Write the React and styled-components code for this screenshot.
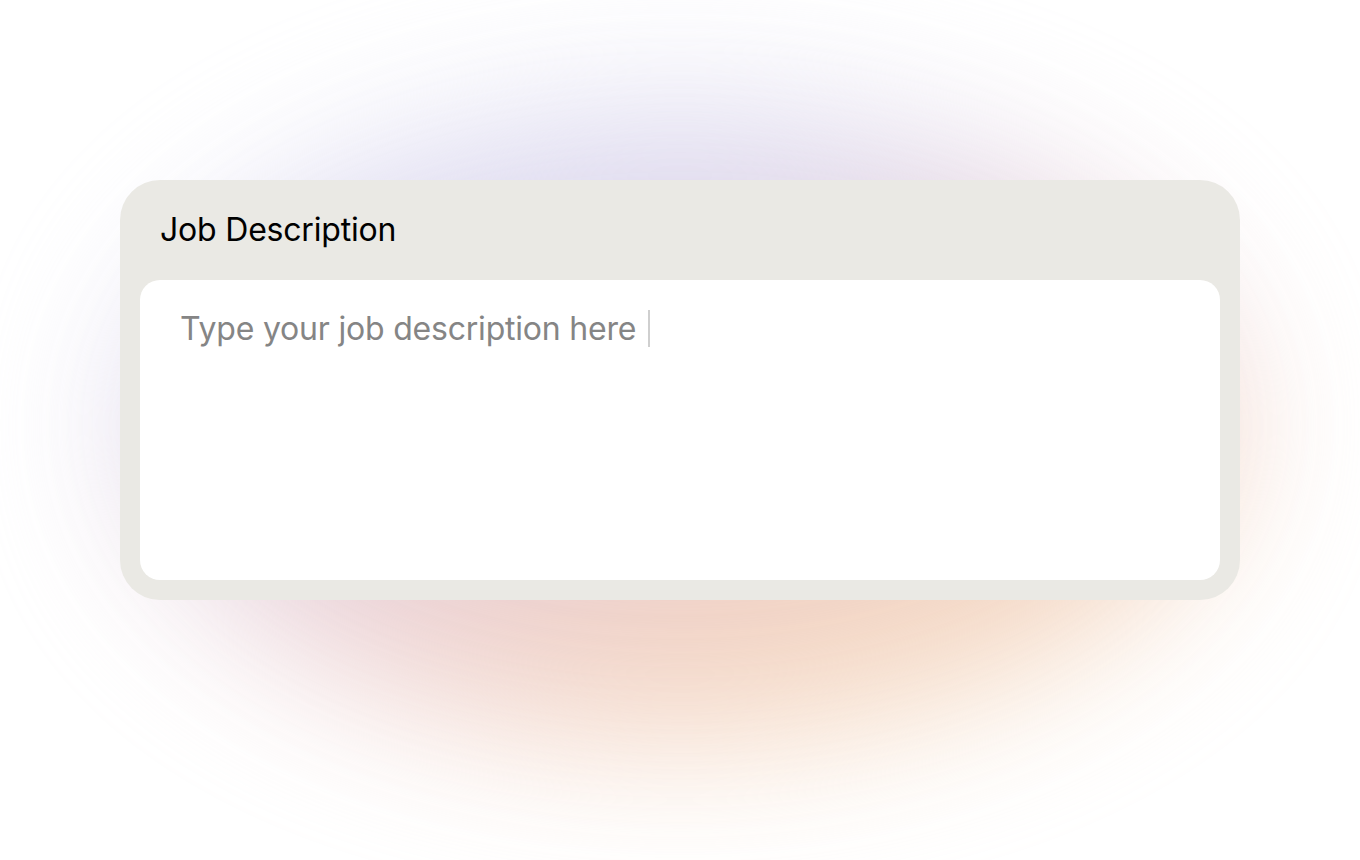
import React from "react";
import styled, { createGlobalStyle } from "styled-components";

const Global = createGlobalStyle`
  html, body { margin: 0; padding: 0; background: #ffffff; }
  body { font-family: Inter, "Noto Sans", sans-serif; }
  #root { min-height: 860px; }
`;

const Page = styled.div`
  width: 1360px;
  height: 860px;
  overflow: hidden;
  display: flex;
  justify-content: center;
  align-items: flex-start;
  padding-top: 180px;
  box-sizing: border-box;
  background: #ffffff;
`;

const Stage = styled.div`
  position: relative;
  width: 1120px;
`;

const Glow = styled.div`
  position: absolute;
  left: 10px;
  right: 10px;
  top: -70px;
  bottom: -140px;
  border-radius: 50%;
  background: linear-gradient(
    160deg,
    #d8daf4 0%,
    #dad5ec 30%,
    #e9cbd0 55%,
    #f2cfb8 75%,
    #f8e6c6 100%
  );
  filter: blur(75px);
  opacity: 0.9;
  z-index: 0;
`;

const Card = styled.section`
  position: relative;
  z-index: 1;
  background: #eae9e4;
  border-radius: 40px;
  padding: 0 20px 20px;
  display: flex;
  flex-direction: column;
`;

const Header = styled.header`
  height: 100px;
  display: flex;
  align-items: center;
  padding-left: 20px;
  padding-bottom: 2px;
  box-sizing: border-box;
`;

const Title = styled.h2`
  margin: 0;
  font-family: Inter, "Noto Sans", sans-serif;
  font-weight: 400;
  font-size: 32px;
  letter-spacing: -0.2px;
  color: #000000;
`;

const Field = styled.div`
  background: #ffffff;
  border-radius: 20px;
  height: 300px;
  box-sizing: border-box;
  padding: 30px 40px;
`;

const Line = styled.div`
  display: flex;
  align-items: center;
  height: 37px;
`;

const Placeholder = styled.span`
  font-family: Inter, "Noto Sans", sans-serif;
  font-size: 32px;
  color: #858585;
  letter-spacing: -0.2px;
`;

const Caret = styled.span`
  display: inline-block;
  width: 2px;
  height: 37px;
  margin-left: 12px;
  background: #cfcfcf;
`;

export default function App() {
  return (
    <>
      <Global />
      <Page>
        <Stage>
          <Glow />
          <Card>
            <Header>
              <Title>Job Description</Title>
            </Header>
            <Field>
              <Line>
                <Placeholder>Type your job description here</Placeholder>
                <Caret />
              </Line>
            </Field>
          </Card>
        </Stage>
      </Page>
    </>
  );
}
